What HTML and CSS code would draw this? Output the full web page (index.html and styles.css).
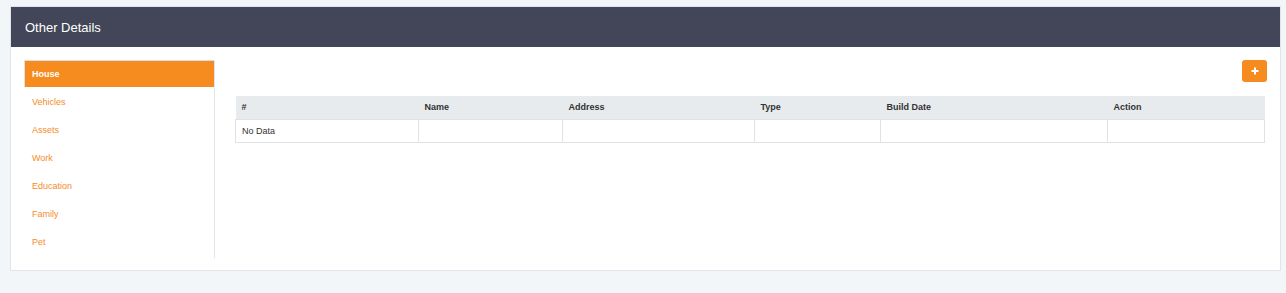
FILE: index.html
```html
<!DOCTYPE html>
<html lang="en">
<head>
    <meta charset="UTF-8">
    <meta name="viewport" content="width=device-width, initial-scale=1.0">
    <title>Other Details</title>
    <link rel="stylesheet" href="styles.css">
</head>
<body>
    <div class="card">
        <div class="card-header">
            <h1>Other Details</h1>
        </div>

        <div class="card-body">
            <ul class="side-nav">
                <li class="active"><a href="#">House</a></li>
                <li><a href="#">Vehicles</a></li>
                <li><a href="#">Assets</a></li>
                <li><a href="#">Work</a></li>
                <li><a href="#">Education</a></li>
                <li><a href="#">Family</a></li>
                <li><a href="#">Pet</a></li>
            </ul>

            <div class="content">
                <div class="toolbar">
                    <button class="btn-add" title="Add">
                        <svg width="8" height="8" viewBox="0 0 8 8">
                            <path d="M4 0.5v7M0.5 4h7" stroke="#fff" stroke-width="2"/>
                        </svg>
                    </button>
                </div>

                <table class="data-table">
                    <thead>
                        <tr>
                            <th class="col-no">#</th>
                            <th class="col-name">Name</th>
                            <th class="col-address">Address</th>
                            <th class="col-type">Type</th>
                            <th class="col-date">Build Date</th>
                            <th class="col-action">Action</th>
                        </tr>
                    </thead>
                    <tbody>
                        <tr>
                            <td>No Data</td>
                            <td></td>
                            <td></td>
                            <td></td>
                            <td></td>
                            <td></td>
                        </tr>
                    </tbody>
                </table>
            </div>
        </div>
    </div>
</body>
</html>
```

FILE: styles.css
```css
/* Basic styles for the page */
body {
    font-family: "Liberation Sans", Arial, sans-serif;
    font-size: 9px;
    color: #333;
    background-color: #f3f6f9;
    margin: 0;
    padding: 6px 5px 0 10px;
}
.card {
    background-color: #fff;
    border: 1px solid #e1e4e8;
}
.card-header {
    background-color: #424658;
    height: 40px;
    display: flex;
    align-items: center;
    padding: 0 14px;
}
.card-header h1 {
    margin: 0;
    color: #fff;
    font-size: 13px;
    font-weight: normal;
}
.card-body {
    display: flex;
    padding: 13px 13px 12px 13px;
}
.side-nav {
    list-style-type: none;
    margin: 0;
    padding: 0;
    width: 190px;
    border-right: 1px solid #e3e6ea;
    padding-bottom: 2px;
}
.side-nav li a {
    display: block;
    height: 28px;
    line-height: 28px;
    padding: 0 8px;
    color: #f68b1f;
    text-decoration: none;
}
.side-nav li.active a {
    background-color: #f68b1f;
    color: #fff;
    font-weight: bold;
    height: 26px;
    line-height: 26px;
    border-top: 1px solid #dde1e6;
    border-left: 1px solid #dde1e6;
    padding-left: 7px;
    margin-bottom: 1px;
}
.content {
    flex: 1;
    padding-left: 20px;
}
.toolbar {
    display: flex;
    justify-content: flex-end;
    margin-bottom: 14px;
}
.btn-add {
    width: 25px;
    height: 22px;
    border: none;
    border-radius: 3px;
    background-color: #f68b1f;
    display: flex;
    align-items: center;
    justify-content: center;
    padding: 0;
}
.data-table {
    width: calc(100% - 2px);
    border-collapse: collapse;
    table-layout: fixed;
}
.data-table th,
.data-table td {
    box-sizing: border-box;
    padding: 0 6px;
}
.data-table th {
    background-color: #e8ebee;
    text-align: left;
    font-weight: bold;
    height: 23px;
    border-bottom: 1px solid #dfe2e6;
}
.data-table td {
    height: 23px;
    border: 1px solid #dfe2e6;
}
.col-no { width: 183px; }
.col-name { width: 144px; }
.col-address { width: 192px; }
.col-type { width: 126px; }
.col-date { width: 227px; }
```
